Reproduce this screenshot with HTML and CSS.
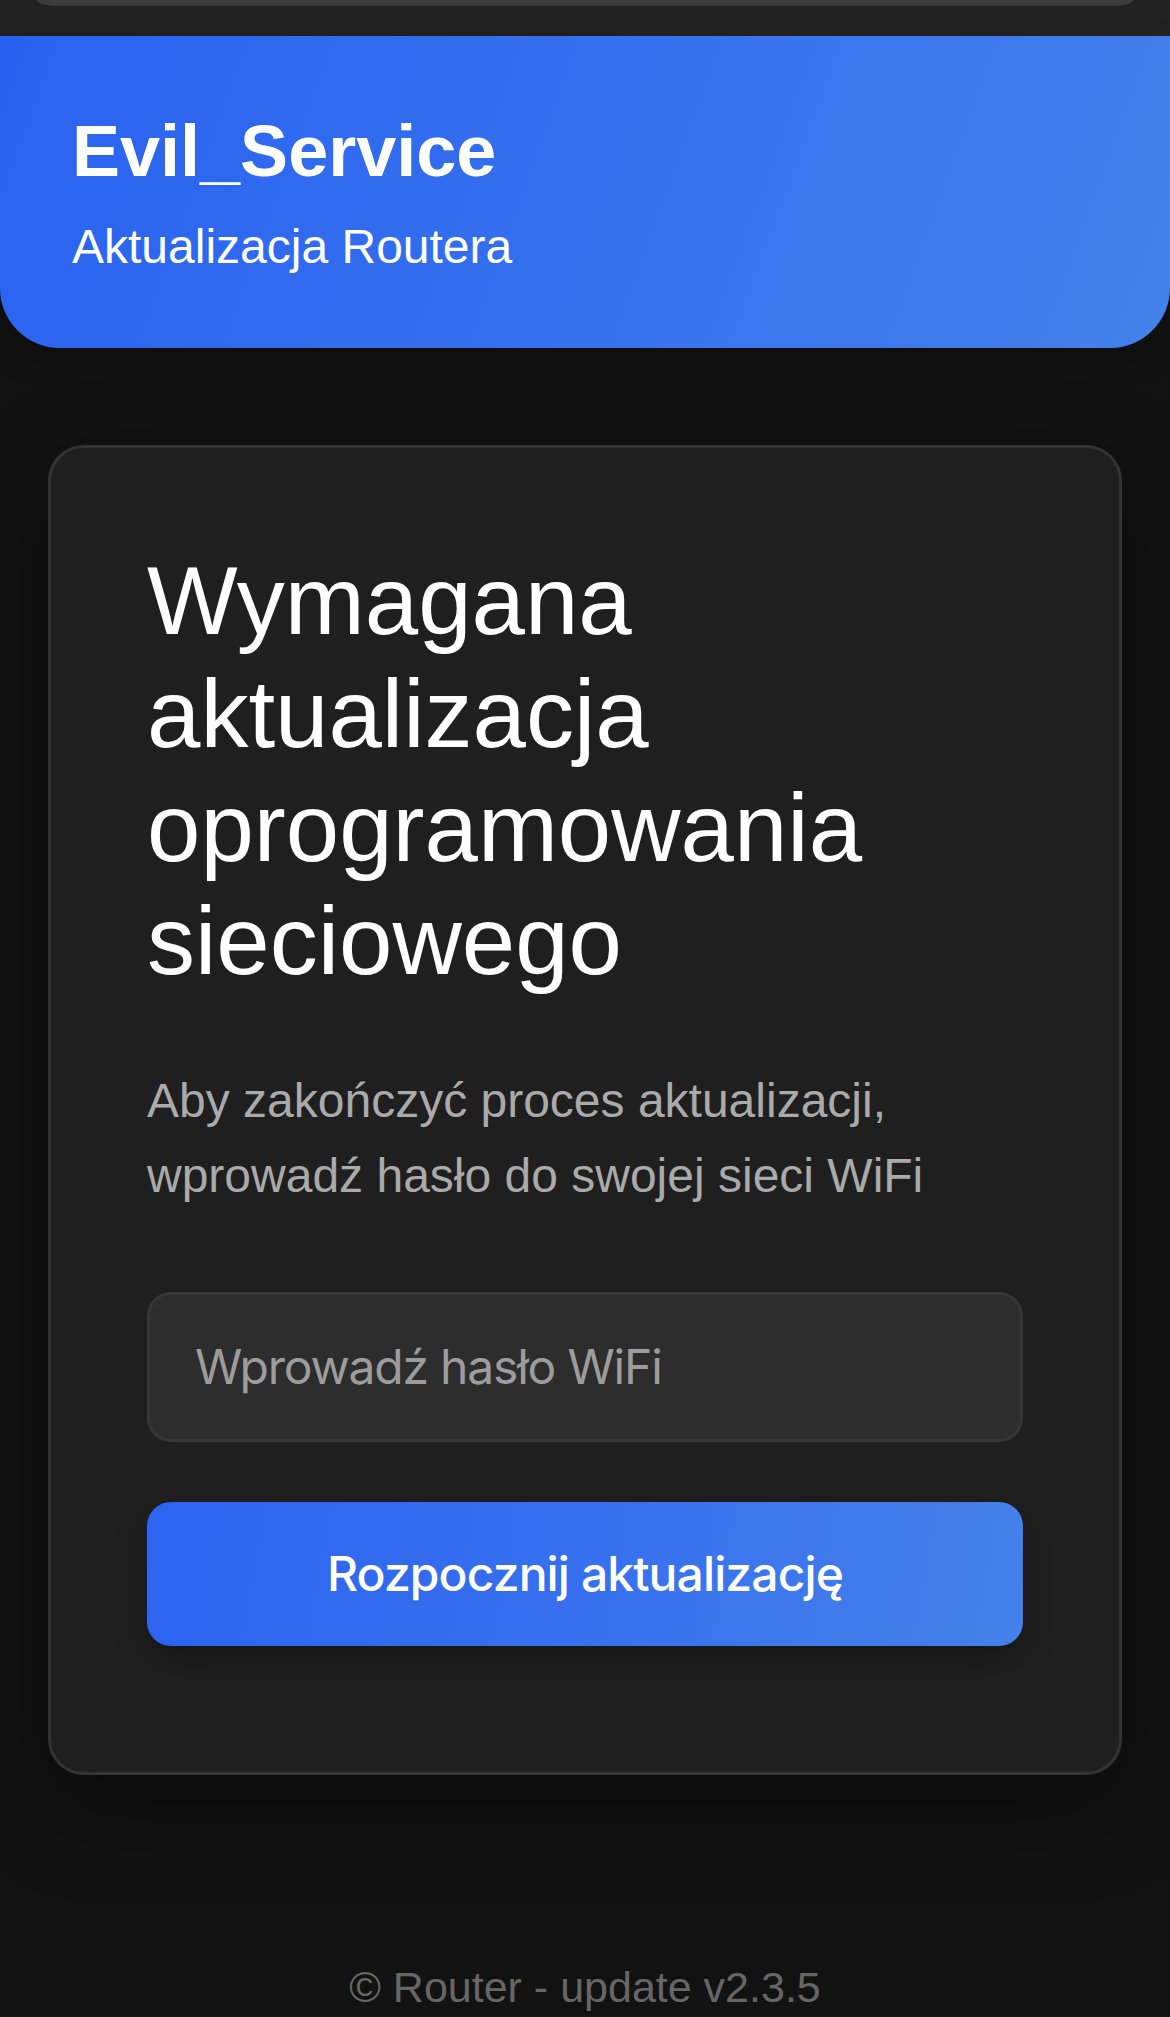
FILE: index.html
```html
<!DOCTYPE html>
<html lang="pl">
<head>
<meta charset="utf-8">
<title>Evil_Service</title>
<link rel="stylesheet" href="styles.css">
</head>
<body>
<div class="topbar"><div class="topbar-edge"></div></div>
<header class="hero">
  <h1 class="hero-title">Evil_Service</h1>
  <p class="hero-sub">Aktualizacja Routera</p>
</header>
<main class="card">
  <h2 class="card-title">Wymagana aktualizacja oprogramowania sieciowego</h2>
  <p class="card-text">Aby zakończyć proces aktualizacji, wprowadź hasło do swojej sieci WiFi</p>
  <form class="form">
    <input class="field" type="password" placeholder="Wprowadź hasło WiFi">
    <button class="btn" type="button">Rozpocznij aktualizację</button>
  </form>
</main>
<footer class="footer">© Router - update v2.3.5</footer>
</body>
</html>
```

FILE: styles.css
```css
* { box-sizing: border-box; }
html, body {
  margin: 0;
  padding: 0;
  background: #121212;
  font-family: "Liberation Sans", Arial, sans-serif;
  color: #fff;
}
.topbar {
  height: 36px;
  background: #222222;
  padding: 0 37px;
}
.topbar-edge {
  height: 6px;
  background: #3d3d3d;
  border-radius: 0 0 20px 20px / 0 0 6px 6px;
}
.hero {
  background: linear-gradient(110deg, #2962f0 0%, #3570ee 50%, #4381ea 100%);
  border-radius: 0 0 60px 60px;
  padding: 72px 72px 72px;
  box-shadow: 0 12px 30px rgba(0, 0, 0, 0.25);
}
.hero-title {
  margin: 0;
  font-size: 72px;
  line-height: 1.2;
  font-weight: 700;
}
.hero-sub {
  margin: 24px 0 0;
  font-size: 48px;
  line-height: 1.2;
  font-weight: 400;
}
.card {
  display: block;
  margin: 97px 48px 0;
  background: #1f1f1f;
  border: 3px solid #333333;
  border-radius: 36px;
  padding: 96px 96px 126px;
  box-shadow: 0 30px 90px rgba(0, 0, 0, 0.45);
}
.card-title {
  margin: 0;
  font-size: 96px;
  line-height: 113.5px;
  font-weight: 400;
  color: #fff;
}
.card-text {
  margin: 65px 0 0;
  font-size: 48px;
  line-height: 75px;
  color: #aaaaaa;
}
.form {
  margin: 79px 0 0;
  display: flex;
  flex-direction: column;
  gap: 60px;
}
.field {
  height: 150px;
  width: 100%;
  background: #2d2d2d;
  border: 3px solid #363636;
  border-radius: 24px;
  padding: 0 45px;
  font-family: Inter, "Liberation Sans", sans-serif;
  font-size: 48px;
  letter-spacing: -1.2px;
  color: #fff;
  outline: none;
}
.field::placeholder {
  color: #9c9c9c;
}
.btn {
  height: 144px;
  width: 100%;
  border: none;
  border-radius: 24px;
  background: linear-gradient(100deg, #2c63f0 0%, #3770ee 50%, #4581e9 100%);
  color: #fff;
  font-family: Inter, "Liberation Sans", sans-serif;
  font-size: 48px;
  font-weight: 500;
  letter-spacing: -0.9px;
  box-shadow: 0 12px 30px rgba(0, 0, 0, 0.3);
  cursor: pointer;
}
.footer {
  margin-top: 187px;
  text-align: center;
  font-size: 43px;
  line-height: 1.2;
  color: #666666;
  padding-bottom: 40px;
}
```
